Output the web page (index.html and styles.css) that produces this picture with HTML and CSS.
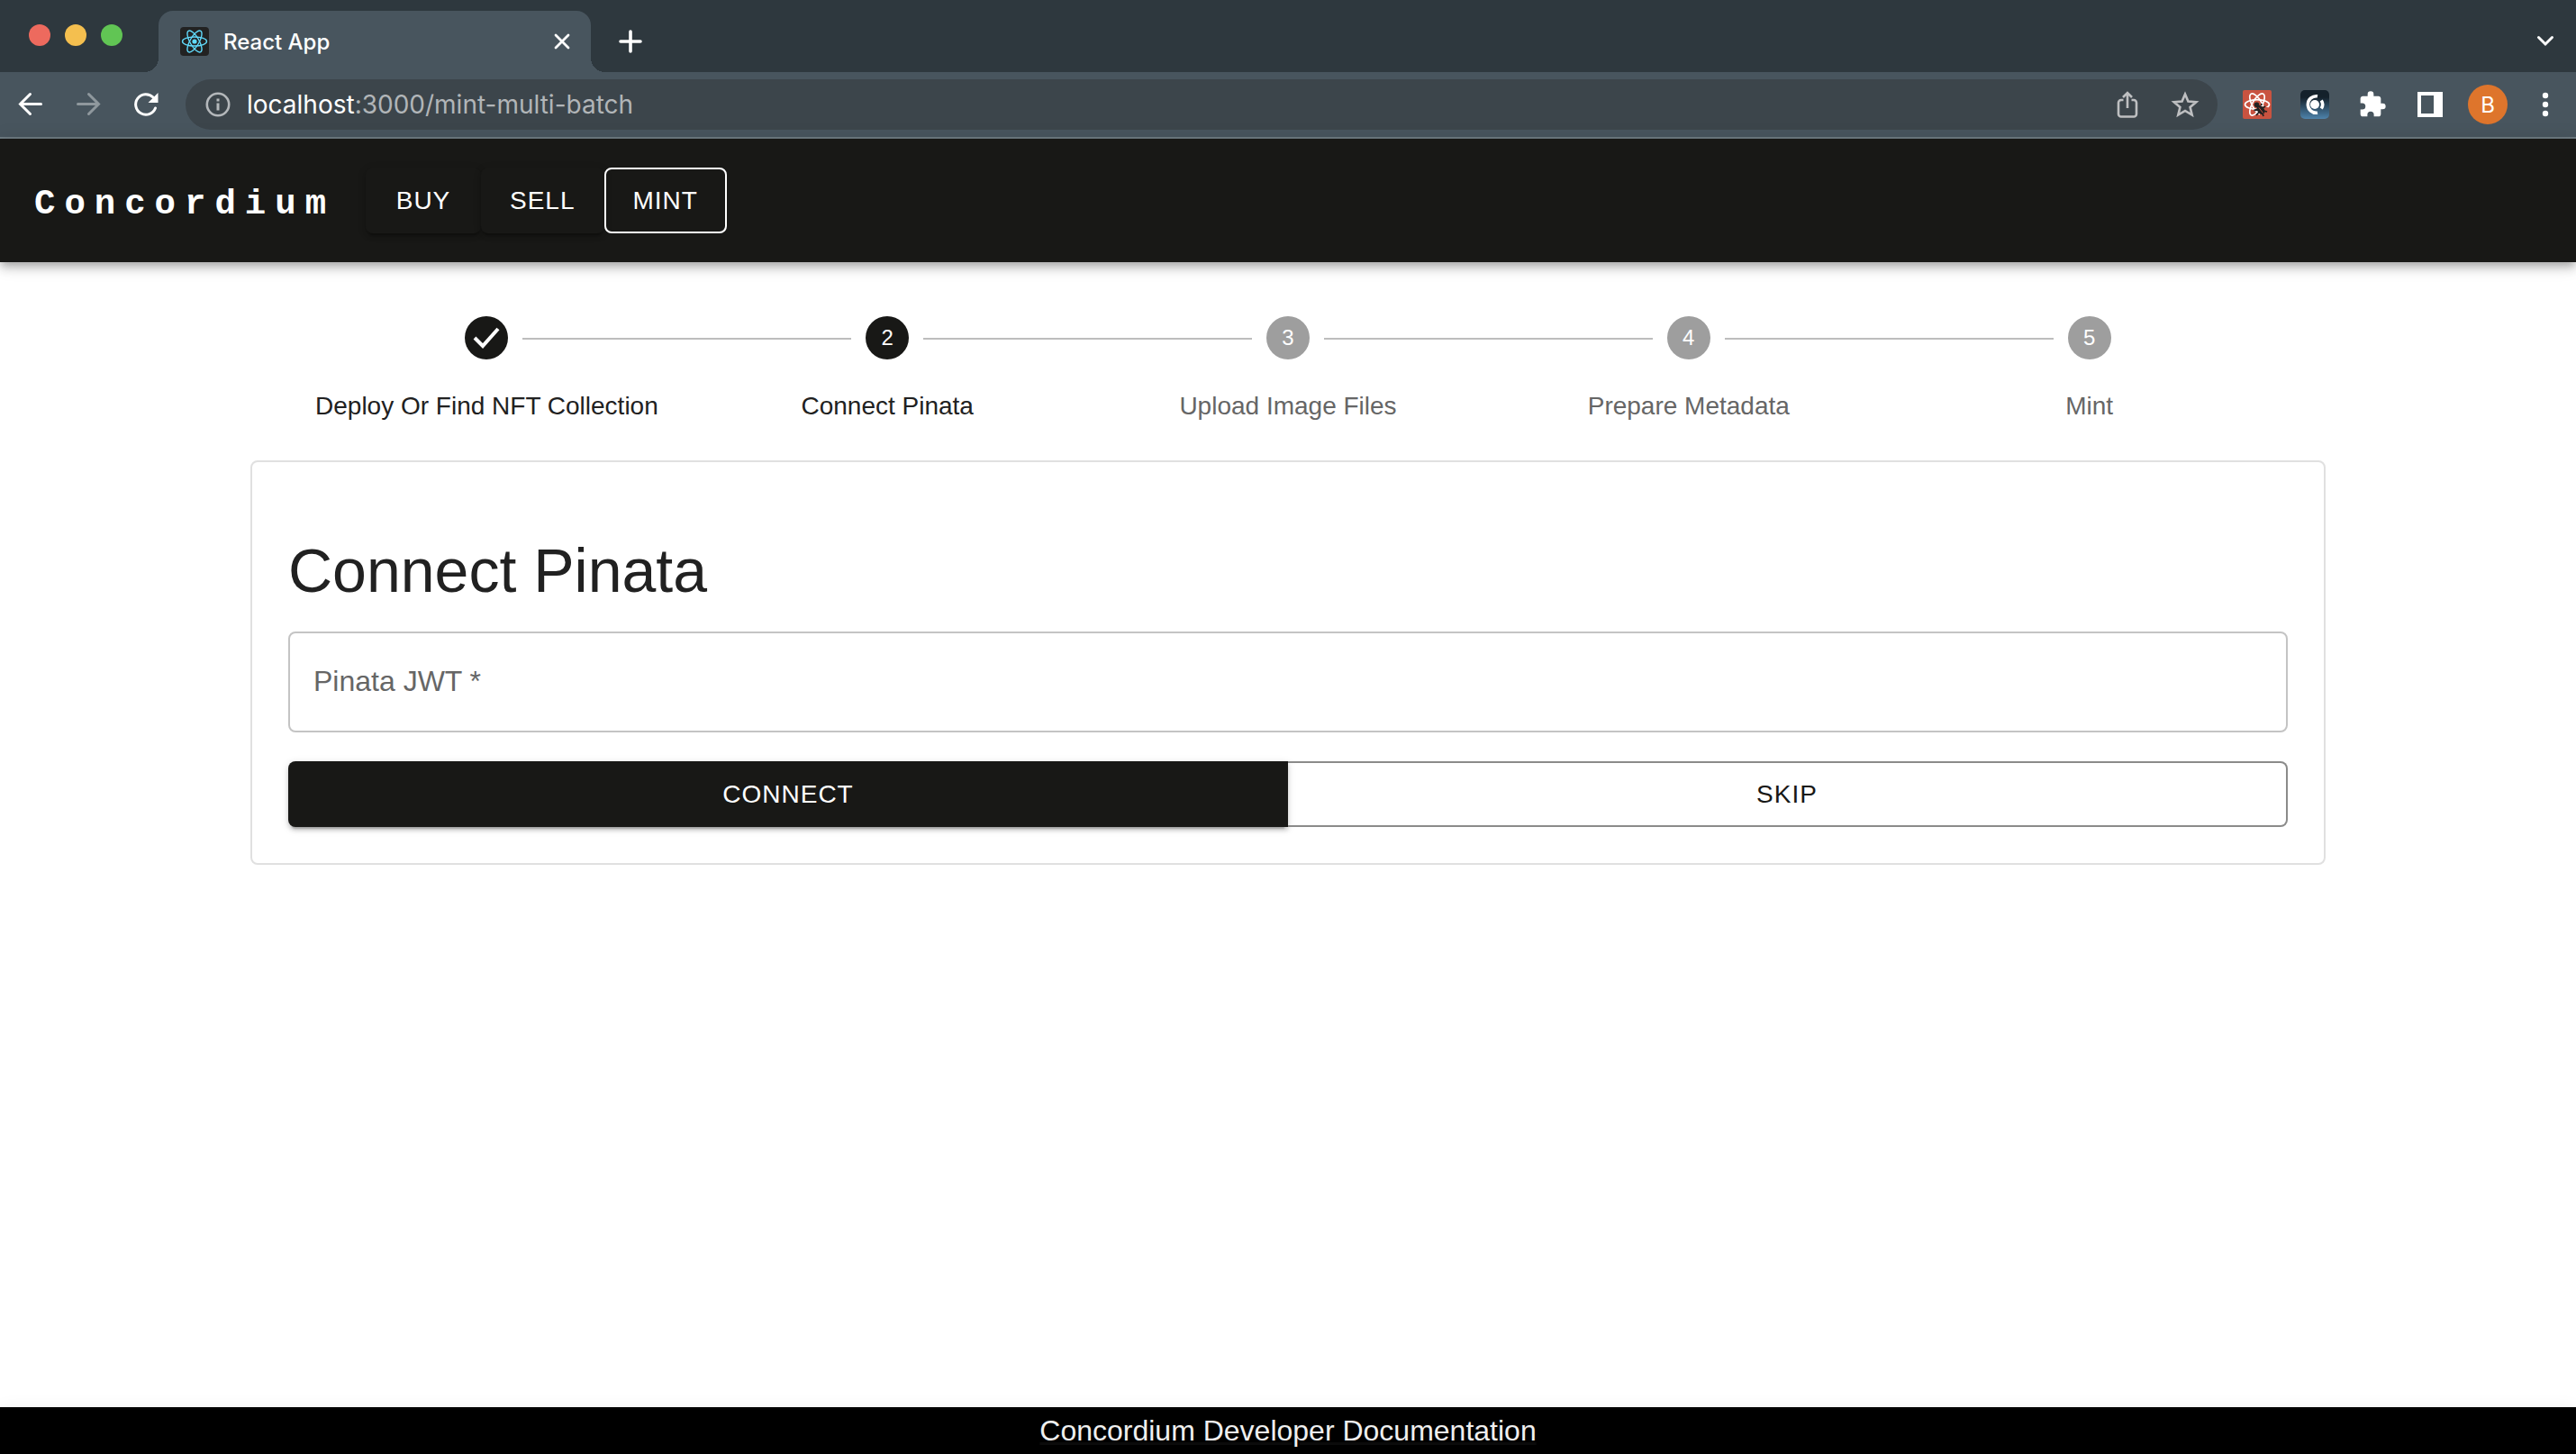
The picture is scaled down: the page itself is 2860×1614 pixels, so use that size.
FILE: index.html
```html
<!DOCTYPE html>
<html lang="en">
<head>
<meta charset="utf-8">
<title>React App</title>
<link rel="stylesheet" href="styles.css">
</head>
<body>
<div class="browser">
  <div class="tab-strip">
    <div class="lights"><span class="light red"></span><span class="light yellow"></span><span class="light green"></span></div>
    <div class="tab">
      <svg class="favicon" viewBox="0 0 32 32" aria-hidden="true"><rect width="32" height="32" rx="4" fill="#222"/><g fill="none" stroke="#61dafb" stroke-width="1.4"><ellipse cx="16" cy="16" rx="13.5" ry="5"/><ellipse cx="16" cy="16" rx="13.5" ry="5" transform="rotate(60 16 16)"/><ellipse cx="16" cy="16" rx="13.5" ry="5" transform="rotate(120 16 16)"/></g><circle cx="16" cy="16" r="2.6" fill="#61dafb"/></svg>
      <span class="tab-title">React App</span>
      <button class="icon-button tab-close" aria-label="Close tab"><svg width="20" height="20" viewBox="0 0 20 20"><path d="M3 3l14 14M17 3L3 17" stroke="#fff" stroke-width="2.8" stroke-linecap="round"/></svg></button>
    </div>
    <button class="icon-button new-tab" aria-label="New tab"><svg width="26" height="26" viewBox="0 0 26 26"><path d="M13 2v22M2 13h22" stroke="#fff" stroke-width="3.6" stroke-linecap="round"/></svg></button>
    <button class="icon-button tab-search" aria-label="Search tabs"><svg width="20" height="14" viewBox="0 0 20 14"><path d="M2.5 2.5L10 10l7.500-7.500" fill="none" stroke="#fff" stroke-width="3" stroke-linecap="round"/></svg></button>
  </div>
  <div class="toolbar">
    <div class="history">
      <button class="icon-button" aria-label="Back"><svg width="32" height="32" viewBox="0 0 32 32"><path d="M27.500 15.500H4.500M15.500 4.500l-11 11 11 11" fill="none" stroke="#fff" stroke-width="3" stroke-linecap="round"/></svg></button>
      <button class="icon-button" aria-label="Forward"><svg width="32" height="32" viewBox="0 0 32 32"><path d="M4.500 15.500h23M16.500 4.500l11 11-11 11" fill="none" stroke="#8f989d" stroke-width="3" stroke-linecap="round"/></svg></button>
      <button class="icon-button" aria-label="Reload"><svg width="32" height="32" viewBox="0 0 32 32"><path d="M26.500 20A11.300 11.300 0 1 1 24 8" fill="none" stroke="#fff" stroke-width="3" stroke-linecap="round"/><path d="M29.500 3v11H18.500z" fill="#fff"/></svg></button>
    </div>
    <div class="address">
      <svg width="28" height="28" viewBox="0 0 28 28" aria-hidden="true"><circle cx="14" cy="14" r="12.200" fill="none" stroke="#b4b8bb" stroke-width="2.600"/><path d="M14 12.500v8" stroke="#b4b8bb" stroke-width="3"/><path d="M14 7.500v3" stroke="#b4b8bb" stroke-width="3"/></svg>
      <span class="url"><span class="host">localhost</span>:3000/mint-multi-batch</span>
      <button class="icon-button share" aria-label="Share"><svg width="24" height="32" viewBox="0 0 24 32"><path d="M7.500 11H5a3 3 0 0 0-3 3v12.500a3 3 0 0 0 3 3h14a3 3 0 0 0 3-3V14a3 3 0 0 0-3-3h-2.500M12 20V4M7 8l5-5 5 5" fill="none" stroke="#bebfc1" stroke-width="2.600"/></svg></button>
      <button class="icon-button" aria-label="Bookmark"><svg width="32" height="32" viewBox="0 0 32 32"><path d="M16 4.500l3.400 8 8.900.7-6.700 5.800 2.100 8.600L16 23l-7.700 4.600 2.100-8.600-6.700-5.800 8.900-.7z" fill="none" stroke="#bebfc1" stroke-width="2.600"/></svg></button>
    </div>
    <div class="extensions">
      <button class="icon-button" aria-label="React Developer Tools"><svg width="32" height="32" viewBox="0 0 32 32"><rect width="32" height="32" rx="2" fill="#c95340"/><g fill="none" stroke="#fff" stroke-width="1.700"><ellipse cx="16" cy="16" rx="13.500" ry="5.400"/><ellipse cx="16" cy="16" rx="13.500" ry="5.400" transform="rotate(60 16 16)"/><ellipse cx="16" cy="16" rx="13.500" ry="5.400" transform="rotate(120 16 16)"/></g><path d="M18 18l10 1-2 9-7 2z" fill="#c95340"/><g fill="#222"><circle cx="15.500" cy="16.200" r="2.800"/><ellipse cx="20" cy="22" rx="3.800" ry="5.500" transform="rotate(-38 20 22)"/></g><path d="M12.500 22.500l5-1M15 28l3.500-4M20.500 17l.500-2M22 20l3-2M23 23l4 1M22 26l1 3" stroke="#222" stroke-width="1.800"/><path d="M18 19.500l4.500 6" stroke="#c95340" stroke-width="1"/></svg></button>
      <button class="icon-button" aria-label="Concordium Wallet"><svg width="32" height="32" viewBox="0 0 32 32"><defs><linearGradient id="wallet" x1="0" y1="0" x2="0" y2="1"><stop offset=".25" stop-color="#14212b"/><stop offset="1" stop-color="#4e83ab"/></linearGradient></defs><rect width="32" height="32" rx="5" fill="url(#wallet)"/><path d="M19 6.800A9.300 9.300 0 1 0 19 25.200" fill="none" stroke="#fff" stroke-width="3.600"/><circle cx="16" cy="16" r="5" fill="#fff"/><path d="M23.200 11.500a8 8 0 0 1 0 9" fill="none" stroke="#fff" stroke-width="3.600"/></svg></button>
      <button class="icon-button" aria-label="Extensions"><svg width="32" height="32" viewBox="0 0 24 24"><path fill="#fff" d="M20.500 11H19V7c0-1.100-.9-2-2-2h-4V3.500a2.500 2.500 0 0 0-5 0V5H4c-1.100 0-2 .9-2 2v3.800h1.500a2.700 2.700 0 0 1 0 5.400H2V20c0 1.100.9 2 2 2h3.800v-1.500a2.700 2.700 0 0 1 5.400 0V22H17c1.100 0 2-.9 2-2v-4h1.500a2.500 2.500 0 0 0 0-5z"/></svg></button>
      <button class="icon-button" aria-label="Side panel"><svg width="32" height="32" viewBox="0 0 32 32"><path fill="#fff" fill-rule="evenodd" d="M2 2h28v28H2zM6 6v20H20V6z"/></svg></button>
      <button class="avatar" aria-label="Profile">B</button>
      <button class="icon-button" aria-label="Menu"><svg width="32" height="32" viewBox="0 0 32 32"><g fill="#fff"><circle cx="16" cy="6" r="3.200"/><circle cx="16" cy="16" r="3.200"/><circle cx="16" cy="26" r="3.200"/></g></svg></button>
    </div>
  </div>
</div>

<header class="app-bar">
  <a class="brand" href="#">Concordium</a>
  <nav class="nav">
    <button class="button dark">BUY</button>
    <button class="button dark">SELL</button>
    <button class="button current">MINT</button>
  </nav>
</header>

<main class="content">
  <ol class="stepper">
    <li class="step done"><span class="dot"><svg width="48" height="48" viewBox="0 0 24 24" role="img" aria-label="Completed"><path d="M5.500 12l4.500 4.500 8.500-9.500" fill="none" stroke="#fff" stroke-width="2"/></svg></span><span class="step-label">Deploy Or Find NFT Collection</span></li>
    <li class="step active"><span class="dot">2</span><span class="step-label">Connect Pinata</span></li>
    <li class="step"><span class="dot">3</span><span class="step-label">Upload Image Files</span></li>
    <li class="step"><span class="dot">4</span><span class="step-label">Prepare Metadata</span></li>
    <li class="step"><span class="dot">5</span><span class="step-label">Mint</span></li>
  </ol>

  <form class="card">
    <h1 class="title">Connect Pinata</h1>
    <div class="field">
      <label class="field-label" for="jwt">Pinata JWT<span class="required">*</span></label>
      <input class="field-input" id="jwt" type="text">
    </div>
    <div class="actions">
      <button class="button dark" type="button">CONNECT</button>
      <button class="button outlined" type="button">SKIP</button>
    </div>
  </form>
</main>

<footer class="footer"><a class="footer-link" href="#">Concordium Developer Documentation</a></footer>
</body>
</html>
```

FILE: styles.css
```css
* {
  box-sizing: border-box;
}

body {
  margin: 0;
  min-height: 100vh;
  display: flex;
  flex-direction: column;
  background: #fff;
  color: #212121;
  font-family: "Liberation Sans", Arial, sans-serif;
}

button {
  margin: 0;
  padding: 0;
  border: 0;
  background: none;
  font: inherit;
  cursor: pointer;
}

svg {
  display: block;
}

/* Browser window */
.browser {
  background: #48555e;
  border-bottom: 2px solid #6f7c83;
  font-family: Inter, sans-serif;
}

.tab-strip {
  height: 80px;
  padding: 12px 24px 0 32px;
  display: flex;
  background: #2e383e;
}

.lights {
  display: flex;
  gap: 16px;
  padding-top: 15px;
}

.light {
  width: 24px;
  height: 24px;
  border-radius: 50%;
}

.red { background: #ed6a5e; }
.yellow { background: #f4bf4f; }
.green { background: #61c554; }

.tab {
  position: relative;
  width: 480px;
  height: 68px;
  margin-left: 40px;
  padding: 0 22px 0 24px;
  display: flex;
  align-items: center;
  gap: 16px;
  border-radius: 16px 16px 0 0;
  background: #48555e;
  color: #fff;
}

.tab::before,
.tab::after {
  content: "";
  position: absolute;
  bottom: 0;
  width: 16px;
  height: 16px;
}

.tab::before {
  right: 100%;
  background: radial-gradient(circle at 0 0, transparent 16px, #48555e 16px);
}

.tab::after {
  left: 100%;
  background: radial-gradient(circle at 100% 0, transparent 16px, #48555e 16px);
}

.favicon {
  width: 32px;
  height: 32px;
}

.tab-title {
  flex: 1;
  font-size: 24px;
  font-weight: 500;
}

.new-tab {
  margin-left: 31px;
}

.tab-search {
  margin-left: auto;
}

.toolbar {
  height: 72px;
  padding: 0 18px;
  display: flex;
  align-items: center;
}

.history,
.extensions {
  display: flex;
  align-items: center;
  gap: 32px;
}

.address {
  flex: 1;
  height: 56px;
  margin: 0 28px;
  padding: 0 20px 0 22px;
  display: flex;
  align-items: center;
  border-radius: 28px;
  background: #3c454b;
}

.url {
  flex: 1;
  margin-left: 18px;
  color: #b1b5b8;
  font-size: 28px;
}

.host {
  color: #fff;
}

.share {
  margin-right: 36px;
}

.avatar {
  width: 44px;
  height: 44px;
  margin: 0 -6px;
  border-radius: 50%;
  background: #de752c;
  color: #fff;
  font-size: 24px;
}

/* Application header */
.app-bar {
  padding: 32px 38px;
  display: flex;
  align-items: center;
  background: #181816;
  box-shadow: 0 4px 8px -2px #0003, 0 8px 10px #0002, 0 2px 20px #0002;
}

.brand {
  width: 368px;
  padding-top: 8px;
  color: #fff;
  font-family: "Courier New", "Liberation Mono", monospace;
  font-size: 39px;
  font-weight: 700;
  letter-spacing: 10px;
  text-decoration: none;
}

.nav {
  display: flex;
}

.button {
  min-width: 128px;
  padding: 12px 32px;
  border-radius: 8px;
  font-size: 28px;
  line-height: 49px;
  letter-spacing: 1px;
}

.dark {
  background: #181816;
  color: #fff;
  box-shadow: 0 6px 2px -4px #0003, 0 4px 4px #0002, 0 2px 10px #0002;
}

.current {
  padding: 10px 30px;
  border: 2px solid #fff;
  color: #fff;
}

.outlined {
  padding: 10px 30px;
  border: 2px solid #8b8b8a;
  color: #181816;
}

/* Page content */
.content {
  flex: 1;
  width: 100%;
  max-width: 2400px;
  margin: 0 auto;
  padding: 60px 48px;
}

.stepper {
  margin: 0 0 40px;
  padding: 0 40px;
  display: grid;
  grid-template-columns: repeat(5, 1fr);
  list-style: none;
}

.step {
  position: relative;
  display: flex;
  flex-direction: column;
  align-items: center;
  gap: 32px;
  color: #666;
}

.step + .step::before {
  content: "";
  position: absolute;
  top: 24px;
  left: calc(-50% + 40px);
  right: calc(50% + 40px);
  height: 2px;
  background: #bdbdbd;
}

.dot {
  width: 48px;
  height: 48px;
  border-radius: 50%;
  background: #9e9e9e;
  color: #fff;
  font-size: 24px;
  line-height: 48px;
  text-align: center;
}

.step-label {
  font-size: 28px;
  line-height: 40px;
}

.done,
.active {
  color: #212121;
}

.done .dot,
.active .dot {
  background: #181816;
}

.card {
  padding: 80px 40px 40px;
  border: 2px solid #e0e0e0;
  border-radius: 8px;
}

.title {
  margin: 0 0 28px;
  font-size: 68px;
  font-weight: 400;
  line-height: 80px;
}

.field {
  position: relative;
  margin-bottom: 32px;
}

.field-label {
  position: absolute;
  top: 32px;
  left: 28px;
  color: #666;
  font-size: 32px;
  line-height: 46px;
}

.required {
  margin-left: 8px;
}

.field-input {
  display: block;
  width: 100%;
  height: 112px;
  padding: 0 28px;
  border: 2px solid #c4c4c4;
  border-radius: 8px;
  background: transparent;
  font: inherit;
  font-size: 32px;
}

.actions {
  display: grid;
  grid-template-columns: 1fr 1fr;
}

.actions .dark {
  border-radius: 8px 0 0 8px;
}

.actions .outlined {
  border-left: 0;
  border-radius: 0 8px 8px 0;
}

.footer {
  padding: 8px 0;
  background: #000;
  box-shadow: 0 2px 20px #0001;
  text-align: center;
}

.footer-link {
  display: inline-block;
  color: #efefef;
  font-size: 32px;
  line-height: 36px;
  text-decoration: underline #0b0b0b;
}
```
